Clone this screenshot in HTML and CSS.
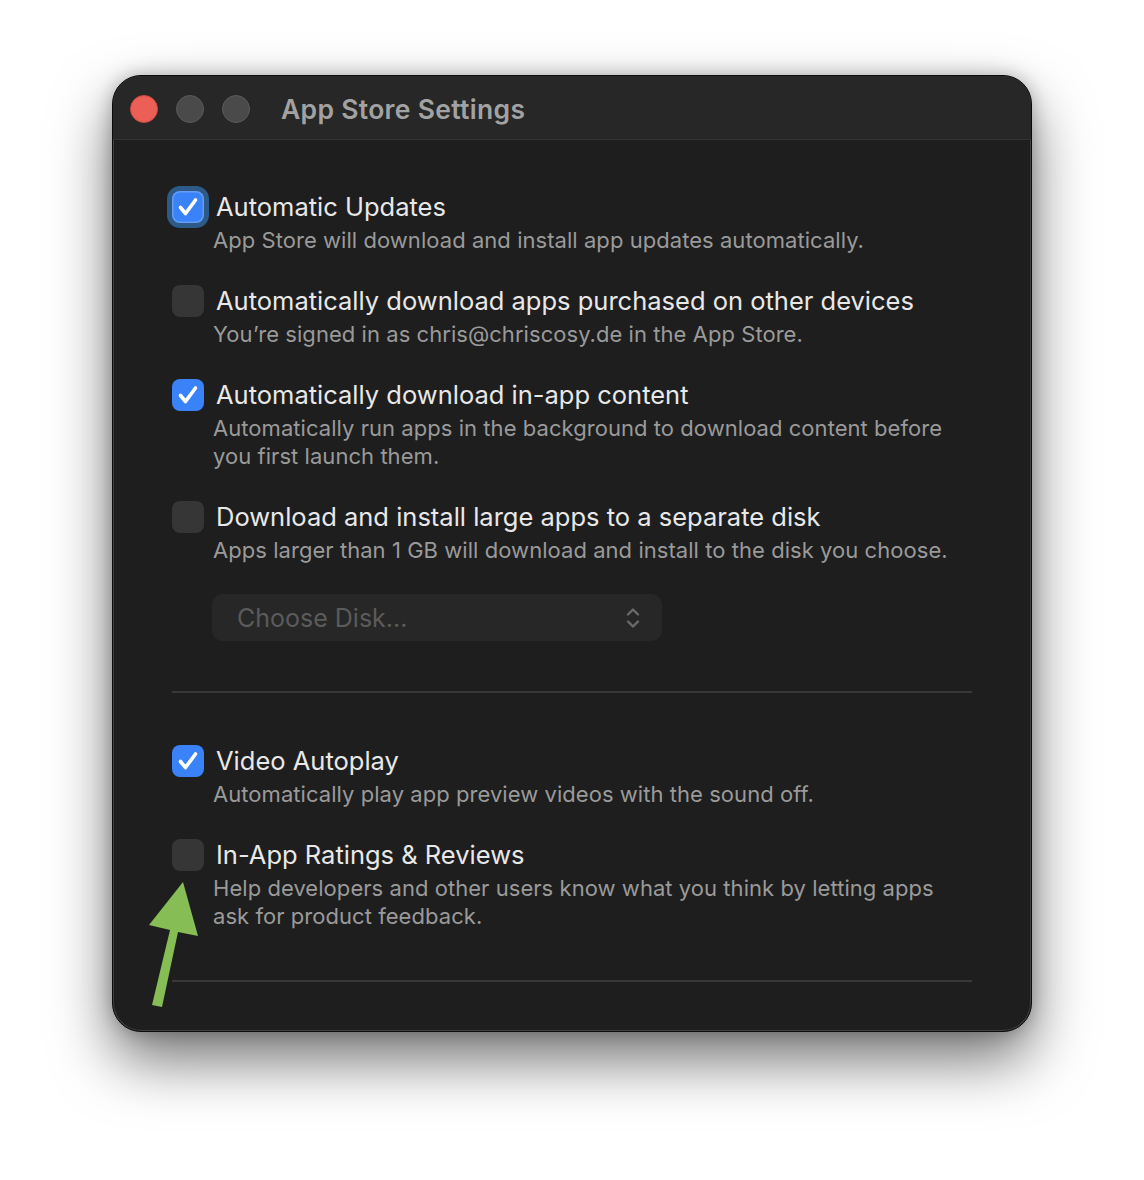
FILE: index.html
```html
<!DOCTYPE html>
<html lang="en">
<head>
<meta charset="utf-8">
<title>App Store Settings</title>
<link rel="stylesheet" href="styles.css">
</head>
<body>
<div class="stage">
  <div class="window">
    <div class="titlebar">
      <div class="lights">
        <span class="light red"></span>
        <span class="light grey"></span>
        <span class="light grey"></span>
      </div>
      <div class="title">App Store Settings</div>
    </div>
    <div class="content">
      <div class="group">
        <div class="item">
          <span class="check on focus"><svg viewBox="0 0 32 32"><path d="M8.5 16.5 L13.5 22.5 L23.5 9"/></svg></span>
          <div class="texts">
            <div class="head">Automatic Updates</div>
            <div class="sub">App Store will download and install app updates automatically.</div>
          </div>
        </div>
        <div class="item">
          <span class="check"></span>
          <div class="texts">
            <div class="head">Automatically download apps purchased on other devices</div>
            <div class="sub">You’re signed in as chris@chriscosy.de in the App Store.</div>
          </div>
        </div>
        <div class="item">
          <span class="check on"><svg viewBox="0 0 32 32"><path d="M8.5 16.5 L13.5 22.5 L23.5 9"/></svg></span>
          <div class="texts">
            <div class="head">Automatically download in-app content</div>
            <div class="sub">Automatically run apps in the background to download content before you first launch them.</div>
          </div>
        </div>
        <div class="item">
          <span class="check"></span>
          <div class="texts">
            <div class="head">Download and install large apps to a separate disk</div>
            <div class="sub">Apps larger than 1 GB will download and install to the disk you choose.</div>
          </div>
        </div>
        <div class="popup">
          <span class="popup-label">Choose Disk...</span>
          <svg class="chev" viewBox="0 0 14 22"><path d="M2 7.5 L7 2.5 L12 7.5 M2 14.5 L7 19.5 L12 14.5"/></svg>
        </div>
      </div>
      <div class="divider"></div>
      <div class="group">
        <div class="item">
          <span class="check on"><svg viewBox="0 0 32 32"><path d="M8.5 16.5 L13.5 22.5 L23.5 9"/></svg></span>
          <div class="texts">
            <div class="head">Video Autoplay</div>
            <div class="sub">Automatically play app preview videos with the sound off.</div>
          </div>
        </div>
        <div class="item">
          <span class="check"></span>
          <div class="texts">
            <div class="head">In-App Ratings &amp; Reviews</div>
            <div class="sub">Help developers and other users know what you think by letting apps ask for product feedback.</div>
          </div>
        </div>
      </div>
      <div class="divider last"></div>
    </div>
  </div>
  <svg class="arrow" viewBox="0 0 60 130" width="60" height="130">
    <polygon points="34,2 0,45 21,50 3,125 13,127 29,52 49,56"/>
  </svg>
</div>
</body>
</html>
```

FILE: styles.css
```css
html, body {
  margin: 0;
  padding: 0;
  background: #ffffff;
}

body {
  font-family: Inter, "Noto Sans", "Liberation Sans", sans-serif;
  -webkit-font-smoothing: antialiased;
}

.stage {
  position: relative;
  width: 1144px;
  height: 1180px;
  padding: 75px 0 0 112px;
  box-sizing: border-box;
}

.window {
  width: 920px;
  height: 957px;
  box-sizing: border-box;
  background: #1e1e1e;
  border: 1px solid #0c0c0c;
  border-radius: 29px;
  box-shadow:
    inset 0 0 0 1px rgba(255, 255, 255, 0.16),
    0 28px 60px rgba(0, 0, 0, 0.55),
    0 0 18px rgba(0, 0, 0, 0.25);
  overflow: hidden;
}

.titlebar {
  height: 64px;
  background: #272727;
  border-bottom: 1px solid #333333;
  display: flex;
  align-items: center;
  padding-left: 17px;
  padding-top: 2px;
  box-sizing: border-box;
}

.lights {
  display: flex;
  gap: 18px;
}

.light {
  width: 28px;
  height: 28px;
  border-radius: 50%;
  box-sizing: border-box;
}

.light.red {
  background: #ec5f57;
  border: 1px solid #c94a43;
}

.light.grey {
  background: #4a4a4a;
  border: 1px solid #5a5a5a;
}

.title {
  margin-left: 31px;
  font-size: 26.5px;
  font-weight: 600;
  color: #a2a2a2;
  letter-spacing: 0.3px;
}

.content {
  padding: 50px 59px 0 59px;
}

.group {
  display: flex;
  flex-direction: column;
  gap: 30px;
}

.item {
  display: flex;
  align-items: flex-start;
  gap: 8px;
}

.check {
  flex: none;
  width: 32px;
  height: 32px;
  margin-top: 1px;
  border-radius: 8px;
  background: #363636;
  box-sizing: border-box;
  display: flex;
  align-items: center;
  justify-content: center;
}

.check.on {
  background: #3a82f7;
}

.check.focus {
  box-shadow: inset 0 0 0 1.5px rgba(255, 255, 255, 0.22), 0 0 0 5px #2d5a87;
}

.check svg {
  width: 32px;
  height: 32px;
}

.check svg path {
  fill: none;
  stroke: #ffffff;
  stroke-width: 3.6;
  stroke-linecap: round;
  stroke-linejoin: round;
}

.texts {
  display: flex;
  flex-direction: column;
  gap: 2px;
}

.head {
  font-size: 25.5px;
  line-height: 34px;
  color: #e8e8e8;
  padding-left: 4px;
}

.sub {
  font-size: 22px;
  line-height: 28px;
  letter-spacing: 0.05px;
  color: #9a9a9a;
  padding-left: 1px;
  max-width: 750px;
}

.popup {
  margin-left: 40px;
  width: 450px;
  height: 47px;
  border-radius: 11px;
  background: #272727;
  display: flex;
  align-items: center;
  justify-content: space-between;
  padding: 0 22px 0 25px;
  box-sizing: border-box;
}

.popup-label {
  font-size: 25px;
  color: #5b5b5b;
}

.chev {
  width: 14px;
  height: 22px;
}

.chev path {
  fill: none;
  stroke: #6a6a6a;
  stroke-width: 2.4;
  stroke-linecap: round;
  stroke-linejoin: round;
}

.divider {
  height: 2px;
  background: #383838;
  margin: 50px 0 51px 0;
}

.divider.last {
  margin: 50px 0 0 0;
}

.arrow {
  position: absolute;
  left: 149px;
  top: 880px;
}

.arrow polygon {
  fill: #86bd55;
}
```
